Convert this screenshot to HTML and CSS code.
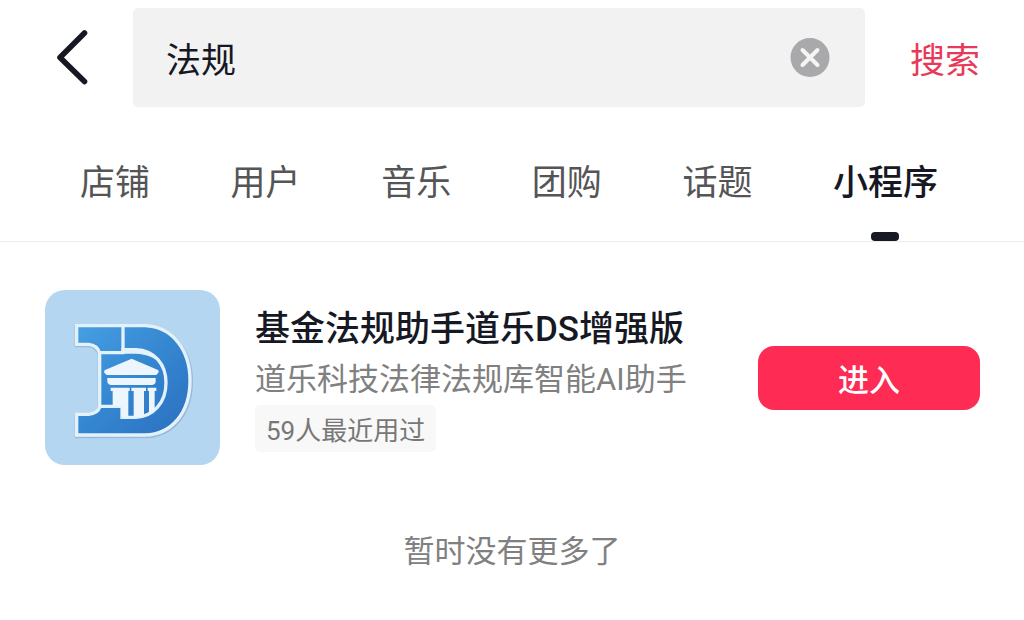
FILE: index.html
```html
<!DOCTYPE html>
<html lang="zh-CN">
<head>
    <meta charset="UTF-8">
    <meta name="viewport" content="width=device-width, initial-scale=1.0">
    <title>法规 - 搜索</title>
    <link rel="stylesheet" href="styles.css">
</head>
<body>
    <form class="search-bar">
        <button type="button" class="back-btn" aria-label="返回">
            <svg viewBox="0 0 36 60" width="36" height="60">
                <path d="M30.500 5 L6 29.500 L30.500 53.500" fill="none" stroke="#161823" stroke-width="5.600" stroke-linecap="round" stroke-linejoin="round"/>
            </svg>
        </button>
        <div class="search-box">
            <input type="text" class="search-input" value="法规" aria-label="搜索内容">
            <button type="button" class="clear-btn" aria-label="清除">
                <svg viewBox="0 0 40 40" width="40" height="40">
                    <circle cx="20" cy="19.500" r="19.500" fill="#a9a9ab"/>
                    <path d="M12.500 12 L27.500 27 M27.500 12 L12.500 27" stroke="#f5f5f5" stroke-width="4" stroke-linecap="round"/>
                </svg>
            </button>
        </div>
        <button type="submit" class="search-btn">搜索</button>
    </form>

    <nav class="tabs">
        <a href="#" class="tab">店铺</a>
        <a href="#" class="tab">用户</a>
        <a href="#" class="tab">音乐</a>
        <a href="#" class="tab">团购</a>
        <a href="#" class="tab">话题</a>
        <a href="#" class="tab active">小程序</a>
    </nav>

    <main>
        <div class="result">
            <svg class="result-logo" viewBox="45 28 525 525" role="img" aria-label="基金法规助手">
                <defs>
                    <linearGradient id="blue" x1="0" y1="0" x2="1" y2="1">
                        <stop offset="0" stop-color="#469fe3"/>
                        <stop offset="0.500" stop-color="#3586d0"/>
                        <stop offset="1" stop-color="#2a6fbe"/>
                    </linearGradient>
                    <clipPath id="inner">
                        <path d="M211 216 H280 V210 H318 C372 212 407 252 407 306 C407 366 370 406 318 410 H275 V378 H211 Z"/>
                    </clipPath>
                </defs>
                <rect x="45" y="28" width="525" height="525" fill="#b4d6f1"/>
                <!-- shadow under the letter -->
                <path d="M138 138 H345 C430 141 485 208 485 303 C485 399 430 467 345 469 H138 V406 H175 Q201 404 207 383 V222 Q200 199 175 196 H138 Z" fill="#8fb4d6" stroke="#98bbdc" stroke-width="8"/>
                <path d="M140 135 H345 C425 138 480 205 480 300 C480 396 425 461 345 463 H140 V401 H176 Q203 399 209 380 V218 Q202 193 176 191 H140 Z" fill="url(#blue)" stroke="#e3f1fb" stroke-width="10"/>
                <!-- inner bowl -->
                <path d="M209 216 H279 V207 H318 C374 209 408 252 408 306 C408 366 370 407 318 410 H276 V377 H209" fill="none" stroke="#e3f1fb" stroke-width="10"/>
                <path d="M279 205 H318 C354 206 382 225 396 252 C376 230 350 221 318 219 H279 Z" fill="#e3f1fb"/>
                <path d="M279 136 V212" stroke="#e3f1fb" stroke-width="10"/>
                <!-- temple -->
                <g fill="#edf6fd" clip-path="url(#inner)">
                    <path d="M305 234 L384 268 Q388 271 385 276 L379 283 H230 L223 276 Q220 271 225 268 Z"/>
                    <path d="M232 292 H377 V303 Q376 312 365 313 H244 Q233 312 232 303 Z"/>
                    <path d="M242 321 H299 V331 H295 V412 H274 V376 H248 V331 H242 Z"/>
                    <path d="M304 321 H348 V331 H342 V412 H311 V331 H304 Z"/>
                    <path d="M353 321 H379 V331 H374 V400 H357 V331 H353 Z"/>
                </g>
            </svg>
            <div class="result-info">
                <h2 class="result-title">基金法规助手道乐DS增强版</h2>
                <p class="result-desc">道乐科技法律法规库智能AI助手</p>
                <span class="result-tag">59人最近用过</span>
            </div>
            <button type="button" class="enter-btn">进入</button>
        </div>
        <p class="no-more">暂时没有更多了</p>
    </main>
</body>
</html>
```
FILE: styles.css
```css
* {
    box-sizing: border-box;
}

body {
    margin: 0;
    background-color: #fff;
    color: #161823;
    font-family: Roboto, "Noto Sans CJK SC", sans-serif;
}

button,
input {
    margin: 0;
    padding: 0;
    border: none;
    background: none;
    color: inherit;
    font-family: inherit;
}

button {
    cursor: pointer;
}

svg {
    display: block;
}

/* Search bar */
.search-bar {
    display: flex;
    align-items: center;
    padding: 8px 44px 0 54px;
}

.back-btn {
    width: 79px;
}

.search-box {
    flex: 1;
    display: flex;
    align-items: center;
    height: 99px;
    padding: 0 35px 0 33px;
    border-radius: 5px;
    background-color: #f2f2f2;
}

.search-input {
    flex: 1;
    min-width: 0;
    height: 60px;
    font-size: 35px;
    outline: none;
}

.search-btn {
    margin-left: 45px;
    color: #e8395a;
    font-size: 35px;
}

/* Tabs */
.tabs {
    display: flex;
    justify-content: space-between;
    padding: 47px 86px 0 80px;
    border-bottom: 1px solid #ececec;
}

.tab {
    position: relative;
    height: 87px;
    color: #555;
    font-size: 35px;
    line-height: 60px;
    text-decoration: none;
}

.tab.active {
    color: #161823;
    font-weight: 500;
}

.tab.active::after {
    content: "";
    position: absolute;
    bottom: 0;
    left: 50%;
    width: 28px;
    height: 9px;
    margin-left: -14px;
    border-radius: 4px;
    background-color: #161823;
}

/* Result */
.result {
    display: flex;
    align-items: center;
    padding: 48px 44px 0 45px;
}

.result-logo {
    width: 175px;
    height: 175px;
    border-radius: 20px;
}

.result-info {
    flex: 1;
    margin-left: 35px;
    padding-top: 2px;
}

.result-title {
    margin: 0;
    font-size: 35px;
    font-weight: 500;
    line-height: 50px;
}

.result-desc {
    margin: 0;
    color: #808080;
    font-size: 31px;
    line-height: 50px;
}

.result-tag {
    display: block;
    width: fit-content;
    padding: 5px 11px 0;
    border-radius: 5px;
    background-color: #f8f8f8;
    color: #777;
    font-size: 26px;
    line-height: 42px;
}

.enter-btn {
    width: 222px;
    height: 64px;
    border-radius: 16px;
    background-color: #fe2c55;
    color: #fff;
    font-size: 31px;
    font-weight: 500;
}

.no-more {
    margin: 62px 0 0;
    color: #808080;
    font-size: 31px;
    line-height: 50px;
    text-align: center;
}
```
